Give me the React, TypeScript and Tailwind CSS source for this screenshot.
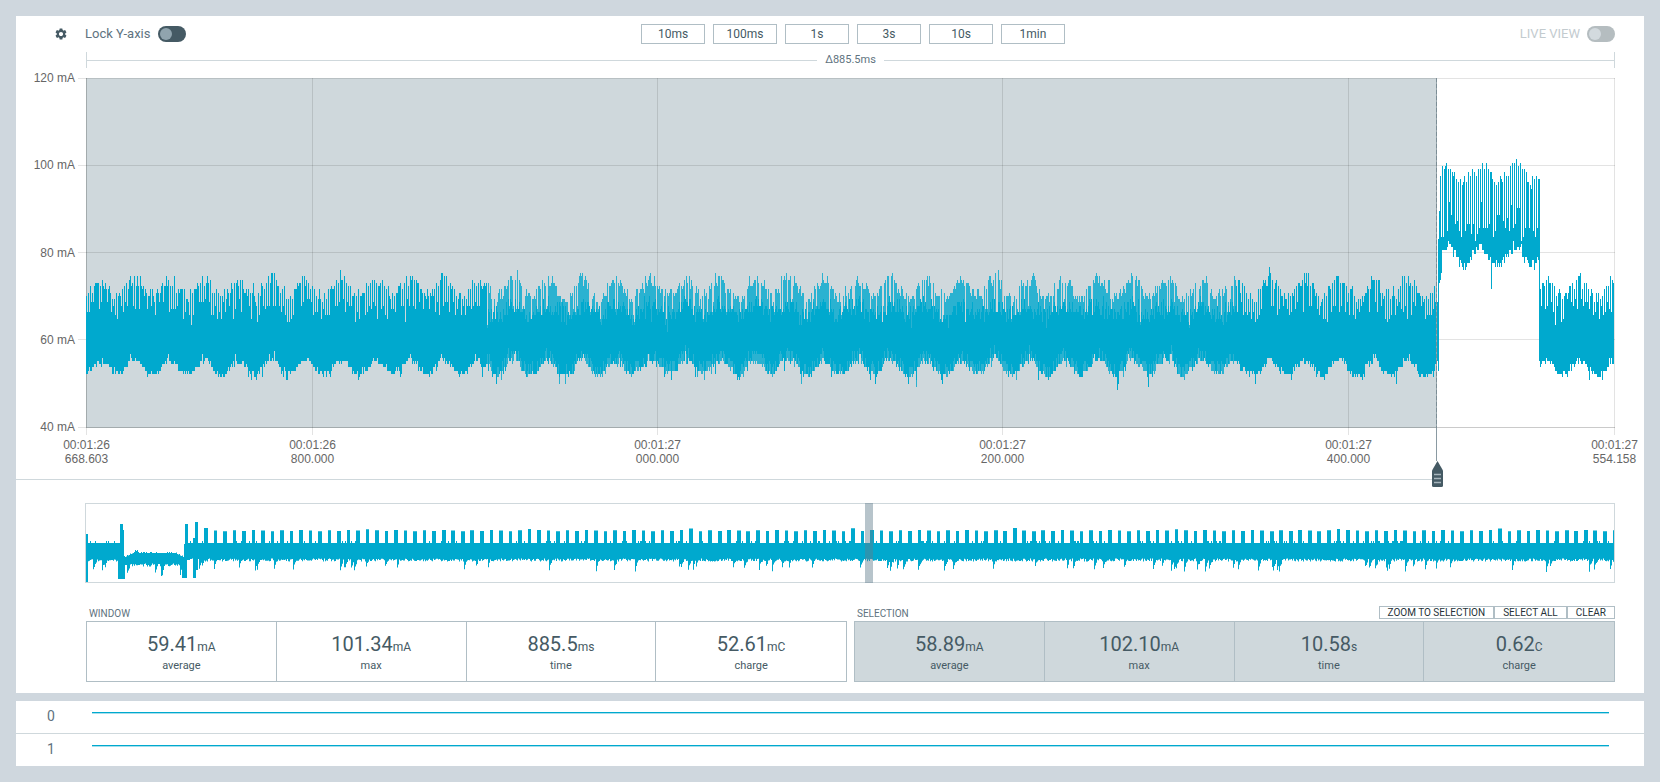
import { MdSettings } from "react-icons/md";

const W = 1529;
const PEAK = 14;
const PERIOD = 34.4;

function random(seed: number) {
  let s = seed;
  return () => {
    s = (s + 0x6d2b79f5) | 0;
    let t = Math.imul(s ^ (s >>> 15), 1 | s);
    t = (t + Math.imul(t ^ (t >>> 7), 61 | t)) ^ t;
    return ((t ^ (t >>> 14)) >>> 0) / 4294967296;
  };
}

const snap = (v: number) => Math.round(v / 3.25) * 3.25;

function column(x: number, w: number, top: number, bottom: number) {
  return `M${x} ${top.toFixed(1)}h${w}V${bottom.toFixed(1)}h${-w}z`;
}

function buildTrace() {
  const r = random(11);
  let solid = "";
  let soft = "";
  let drift = 0;
  for (let x = 0; x < W - 1; x++) {
    drift = drift * 0.8 + (r() - 0.5) * 3;
    const high = x > 1352 && x < 1453;
    const shift = high ? 5 : 0;
    const swell = (1 + Math.cos(((x - PEAK - shift) / PERIOD) * Math.PI * 2)) / 2;
    if (x === 1352) {
      solid += column(x, 1, 161, 293);
      continue;
    }
    if (x === 1453) {
      solid += column(x, 1, 101, 283);
      continue;
    }
    if (high) {
      const tall = x % 2 === 0 || r() < 0.12;
      const top = tall ? 104 - swell * 16 + (r() - 0.5) * 13 : 122 + r() * 42;
      let bottom = 187 - swell * 18 + (r() - 0.5) * 12;
      if (x === 1405) bottom = 210;
      if (x < 1356) bottom = 204 - (x - 1353) * 4;
      solid += column(x, 1, snap(top), snap(bottom));
      continue;
    }
    const middle = x > 400 && x < 1150;
    const tall = middle ? r() < 0.76 : x % 2 === 0 || r() < 0.3;
    const peak = 219 - swell * 17 + drift * 1.2 + (r() - 0.5) * 12 - (r() < 0.03 ? 8 : 0);
    const body = 228 - swell * 9 + r() * 16 + (r() < 0.06 ? 7 : 0);
    let bottom = 296 - swell * 13 + drift + (r() - 0.5) * 6;
    if (swell < 0.55 && r() < 0.08) bottom += 7;
    if (swell > 0.8 && r() < 0.15) bottom -= 5;
    if (r() < 0.008) bottom += 12;
    if (middle) {
      soft += column(x, 1, snap(tall ? peak : body), snap(bottom));
      solid += column(x, 1, snap(body - 4 + r() * 8), snap(bottom - (r() < 0.5 ? 9 : 0)));
    } else {
      solid += column(x, 1, snap(tall ? peak : body), snap(bottom));
    }
  }
  return { solid, soft };
}

function buildOverview() {
  const r = random(5);
  let d = "";
  let spike = 0;
  for (let x = 0; x < 1528; x++) {
    if (r() < 0.06) spike = 6 + r() * 5;
    let top = 39 + (r() < 0.15 ? -2 : 0);
    let bottom = 54.5 + r() * 3 + spike;
    spike = spike > 5 ? spike * 0.55 : spike * 0.3;
    if (x < 2) {
      top = 30;
      bottom = 78;
    } else if (x >= 32 && x < 39) {
      top = x < 34 ? 39 : x < 37 ? 20 : x < 38 ? 26 : 52;
      bottom = 75;
    } else if (x >= 39 && x < 98) {
      const edge = x < 47 ? (47 - x) / 2 : x > 89 ? (x - 89) / 2 : 0;
      top = 49 + Math.min(edge, 4) + (r() < 0.25 ? -1 : 0) - (x > 48 && x < 52 ? 2 : 0);
      bottom += 5;
      if (x >= 96) bottom = 74;
    } else if (x >= 98 && x < 102) {
      top = x === 98 ? 40 : 20;
      bottom = x < 101 ? 74 : 56;
    } else if (x >= 107 && x < 112) {
      top = x < 109 ? 34 : 18;
      bottom = x < 110 ? 74 : 66;
    } else if (x > 114) {
      const phase = (x - 117.5) / 9.517;
      const index = Math.floor(phase);
      if ((phase - index) * 9.517 < 3.6) top = 26 + ((index * 7) % 5) * 0.3 - (index % 17 === 0 ? 2 : 0);
    }
    d += column(x, 1, top, bottom);
  }
  return d;
}

const trace = buildTrace();
const overview = buildOverview();

const yTicks = ["120 mA", "100 mA", "80 mA", "60 mA", "40 mA"];
const yLines = [0.5, 87.5, 174.5, 261.5, 349.5];
const xTicks = [
  { x: 0.5, a: "00:01:26", b: "668.603" },
  { x: 226.5, a: "00:01:26", b: "800.000" },
  { x: 571.5, a: "00:01:27", b: "000.000" },
  { x: 916.5, a: "00:01:27", b: "200.000" },
  { x: 1262.5, a: "00:01:27", b: "400.000" },
  { x: 1528.5, a: "00:01:27", b: "554.158" },
];
const ranges = ["10ms", "100ms", "1s", "3s", "10s", "1min"];
const windowStats = [
  ["59.41", "mA", "average"],
  ["101.34", "mA", "max"],
  ["885.5", "ms", "time"],
  ["52.61", "mC", "charge"],
];
const selectionStats = [
  ["58.89", "mA", "average"],
  ["102.10", "mA", "max"],
  ["10.58", "s", "time"],
  ["0.62", "C", "charge"],
];

function Toggle({ label, live }: { label: string; live?: boolean }) {
  return (
    <label
      className={`relative flex items-center gap-[7px] text-[13px] leading-4 ${live ? "text-[#c3cbcf]" : "text-[#607380]"}`}
    >
      {label}
      <input type="checkbox" role="switch" disabled={live} className="peer sr-only" />
      <span
        className={`flex h-4 w-7 items-center rounded-full px-0.5 peer-checked:justify-end ${live ? "bg-[#b5bdc0]" : "bg-[#455a64]"}`}
      >
        <span className={`size-3 rounded-full ${live ? "bg-[#d3dade]" : "bg-[#90a4ae]"}`} />
      </span>
    </label>
  );
}

function Stats({ items, filled }: { items: string[][]; filled?: boolean }) {
  return (
    <dl
      className={`mt-0.5 grid h-[61px] grid-cols-4 divide-x divide-[#b0bec5] border border-[#b0bec5] ${filled ? "bg-[#cfd8dc]" : "bg-white"}`}
    >
      {items.map(([value, unit, name]) => (
        <div key={name} className="flex flex-col-reverse items-center justify-end pt-2.5 text-[#455a64]">
          <dt className="text-[11px] leading-5">{name}</dt>
          <dd className="text-xl leading-6">
            {value}
            <span className="text-xs">{unit}</span>
          </dd>
        </div>
      ))}
    </dl>
  );
}

function Plot() {
  return (
    <svg
      viewBox={`0 0 ${W} 357`}
      preserveAspectRatio="none"
      className="block h-[357px] w-full overflow-visible"
      role="img"
      aria-label="Current over time"
      shapeRendering="crispEdges"
    >
      <rect width="1350" height="350" fill="#cfd8dc" />
      <g stroke="#000" strokeOpacity="0.11">
        {yLines.map((y) => (
          <path key={y} d={`M-8 ${y}H${W}`} />
        ))}
        {xTicks.map((t) => (
          <path key={t.x} d={`M${t.x} 0V357`} />
        ))}
        <path d="M0.5 0V350M0 349.5H1529" />
      </g>
      <path d={trace.soft} fill="#00a9ce" opacity="0.8" />
      <path d={trace.solid} fill="#00a9ce" />
    </svg>
  );
}

function Cursor() {
  return (
    <div className="absolute top-0 left-[88.293%] -ml-1 w-[11px]">
      <div className="ml-1 h-[350px] w-px bg-[repeating-linear-gradient(#7b8d95_0_4px,#98a5ab_4px_6px)]" />
      <div className="ml-1 h-[33px] w-px bg-[#8a9aa2]" />
      <svg width="11" height="26" viewBox="0 0 11 26" className="block">
        <path d="M5.5 0L11 9.500V24.500Q11 26 9.500 26H1.500Q0 26 0 24.500V9.500z" fill="#455a64" />
        <path d="M2 13.500h7M2 17.500h7M2 21.500h7" stroke="#a7b5bc" strokeWidth="1.6" />
      </svg>
    </div>
  );
}

export default function App() {
  return (
    <main className="min-h-screen bg-[#cfd7de] p-4 font-['Roboto',sans-serif]">
      <section className="bg-white pb-[11px]">
        <header className="flex items-center pt-2 pr-[29px] pl-[38px]">
          <button aria-label="Settings" className="w-[31px] shrink-0 text-[#455a64]">
            <MdSettings size={14} />
          </button>
          <div className="grid flex-1 grid-cols-[1fr_auto_1fr] items-center">
            <div className="flex">
              <Toggle label="Lock Y-axis" />
            </div>
            <div className="flex gap-2 pl-1.5">
              {ranges.map((t) => (
                <button key={t} className="h-5 w-16 border border-[#b0bec5] text-xs leading-4 text-[#455a64]">
                  {t}
                </button>
              ))}
            </div>
            <div className="flex justify-end">
              <Toggle label="LIVE VIEW" live />
            </div>
          </div>
        </header>

        <div className="mt-2 mr-[29px] ml-[70px] flex h-4 items-center border-x border-[#cfd8dc]">
          <div className="h-px flex-1 bg-[#cfd8dc]" />
          <span className="px-2 text-[11px] leading-4 text-[#607380]">Δ885.5ms</span>
          <div className="h-px flex-1 bg-[#cfd8dc]" />
        </div>

        <div className="mr-[29px] flex font-['Liberation_Sans',sans-serif] text-xs text-[#666]">
          <div className="mt-0.5 mr-[11px] flex h-[365px] w-[59px] shrink-0 flex-col justify-between text-right leading-4">
            {yTicks.map((t) => (
              <span key={t}>{t}</span>
            ))}
          </div>
          <div className="relative mt-2.5 min-w-0 flex-1">
            <Plot />
            <div className="relative mt-[3px] h-7">
              {xTicks.map((t) => (
                <div
                  key={t.x}
                  className="absolute top-0 -translate-x-1/2 text-center leading-[14px]"
                  style={{ left: `${(t.x / W) * 100}%` }}
                >
                  {t.a}
                  <br />
                  {t.b}
                </div>
              ))}
            </div>
            <Cursor />
          </div>
        </div>

        <div className="mt-[13px] mr-[29px] flex h-px">
          <div className="w-[70px] bg-[#cfd8dc]" />
          <div className="flex-1">
            <div className="h-px w-[88.1%] bg-[#cfd8dc]" />
          </div>
        </div>

        <div className="relative mt-[23px] mr-[29px] ml-[69px] h-20 border border-[#cfd8dc]">
          <svg
            viewBox="0 0 1528 78"
            preserveAspectRatio="none"
            className="block size-full"
            role="img"
            aria-label="Recording overview"
          >
            <path d={overview} fill="#00a9ce" />
          </svg>
          <div className="absolute -inset-y-px left-[51%] w-2 bg-[#607d8b]/45" />
        </div>

        <div className="mt-[23px] mr-[29px] ml-[70px] grid grid-cols-2 gap-[7px]">
          <div>
            <h2 className="h-[13px] px-[3px] text-[10px] leading-[15px] text-[#607380]">WINDOW</h2>
            <Stats items={windowStats} />
          </div>
          <div>
            <div className="flex h-[13px] justify-between">
              <h2 className="px-[3px] text-[10px] leading-[15px] text-[#607380]">SELECTION</h2>
              <div className="flex text-[10px] leading-[11px] text-[#263238]">
                {["ZOOM TO SELECTION", "SELECT ALL", "CLEAR"].map((t) => (
                  <button key={t} className="border border-[#b0bec5] px-2">
                    {t}
                  </button>
                ))}
              </div>
            </div>
            <Stats items={selectionStats} filled />
          </div>
        </div>
      </section>

      <section className="mt-2 divide-y divide-[#cfd8dc] bg-white">
        {["0", "1"].map((channel) => (
          <div key={channel} className="box-content flex h-8 pr-[35px]">
            <span className="w-[76px] pl-[31px] text-sm leading-[30px] text-[#607380]">{channel}</span>
            <div className="mt-[11px] h-0.5 flex-1 border-t border-[#00a9ce] bg-[#a6dfed]" />
          </div>
        ))}
      </section>
    </main>
  );
}
